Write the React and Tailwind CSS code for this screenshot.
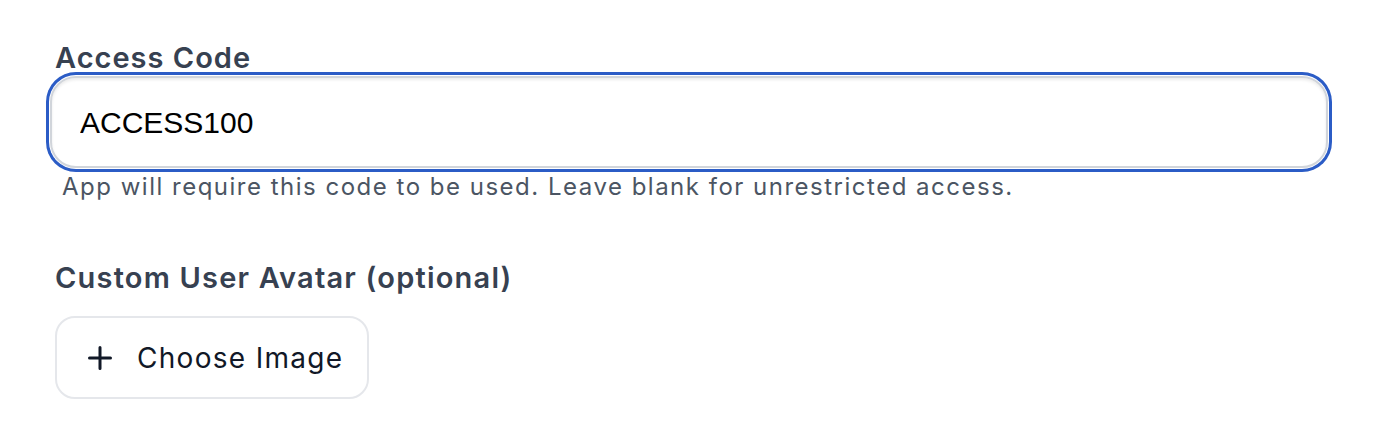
export default function App() {
  return (
    <div className="w-[1378px] h-[438px] bg-white px-[50px] pt-[41px] font-['Inter',sans-serif]">
      {/* Access code */}
      <label className="block ml-[5px] text-[29px] leading-[34px] tracking-[1px] font-semibold text-[#374151]">
        Access Code
      </label>
      <div className="mt-[1px] h-[92px] rounded-[26px] border-2 border-[#d1d5db] bg-white shadow-[inset_0_2px_3px_rgba(0,0,0,0.08)] ring-[3px] ring-[#2b5cc6] ring-offset-1 flex items-center px-[28px]">
        <input
          defaultValue="ACCESS100"
          className="w-full bg-transparent outline-none text-[30px] text-black font-['Liberation_Sans',Arial,sans-serif]"
        />
      </div>
      <p className="mt-[4px] ml-[12px] text-[24px] leading-[30px] tracking-[1.5px] text-[#4b5563]">
        App will require this code to be used. Leave blank for unrestricted access.
      </p>

      {/* Avatar */}
      <label className="block mt-[59px] ml-[5px] text-[29px] leading-[34px] tracking-[1.2px] font-semibold text-[#374151]">
        Custom User Avatar (optional)
      </label>
      <button className="mt-[21px] ml-[5px] h-[83px] w-[314px] rounded-[20px] border-2 border-[#e5e7eb] bg-white flex items-center pl-[31px] gap-[25px] text-[28px] tracking-[1.3px] text-[#111827]">
        <svg width="24" height="24" viewBox="0 0 24 24" fill="none" stroke="currentColor" strokeWidth="3" strokeLinecap="round">
          <path d="M12 1.5v21M1.5 12h21" />
        </svg>
        <span>Choose Image</span>
      </button>
    </div>
  );
}
